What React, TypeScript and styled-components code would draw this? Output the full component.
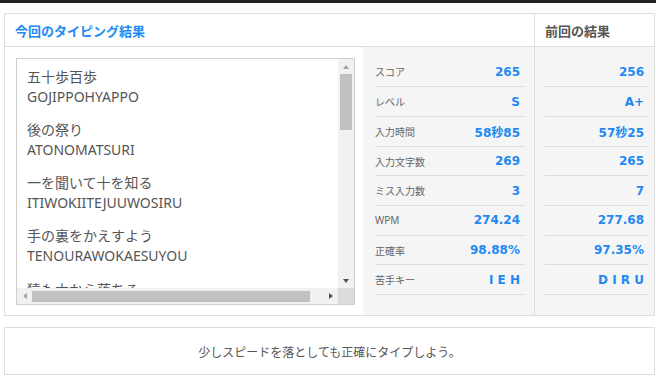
import styled, { createGlobalStyle, css } from "styled-components";

const GlobalStyle = createGlobalStyle`
  *, *::before, *::after { box-sizing: border-box; }
  html, body { margin: 0; padding: 0; background: #fff; }
  body {
    font-family: "Noto Sans", "Noto Sans CJK JP", sans-serif;
    overflow: hidden;
  }
`;

const BLUE = "#2189f2";

const TopBar = styled.div`
  height: 3px;
  background: #222;
`;

const Main = styled.main`
  padding: 10px 0 0 4px;
  width: 655px;
`;

const Panel = styled.section`
  display: flex;
  width: 651px;
  border: 1px solid #ddd;
  background: #fff;
`;

const Section = styled.div<{ $main?: boolean }>`
  display: flex;
  flex-direction: column;
  ${(p) =>
    p.$main
      ? css`
          width: 530px;
          border-right: 1px solid #ddd;
        `
      : css`
          flex: 1;
        `}
`;

const Header = styled.h2<{ $current?: boolean }>`
  margin: 0;
  height: 33px;
  display: flex;
  align-items: center;
  padding-left: 10px;
  border-bottom: 1px solid #ddd;
  font-family: "Noto Sans CJK JP", sans-serif;
  font-size: 13px;
  font-weight: 700;
  color: ${(p) => (p.$current ? BLUE : "#555")};
`;

const Body = styled.div`
  display: flex;
  height: 268px;
`;

const HistoryWrap = styled.div`
  width: 358px;
  padding: 11px 9px 10px 11px;
  background: #fff;
`;

const ScrollBox = styled.div`
  width: 339px;
  height: 247px;
  border: 1px solid #cfcfcf;
  display: grid;
  grid-template-columns: 1fr 16px;
  grid-template-rows: 1fr 16px;
`;

const ScrollContent = styled.div`
  overflow: hidden;
  padding: 7.5px 10px 0 10px;
  white-space: nowrap;
  color: #555;
  font-size: 14px;
  line-height: 20px;
`;

const Entry = styled.div`
  margin-bottom: 13.3px;
`;

const VBar = styled.div`
  background: #f1f1f1;
  display: flex;
  flex-direction: column;
  align-items: center;
`;

const HBar = styled.div`
  background: #f1f1f1;
  display: flex;
  align-items: center;
`;

const ArrowButton = styled.div`
  width: 15px;
  height: 15px;
  flex: none;
  display: flex;
  align-items: center;
  justify-content: center;
`;

const Arrow = styled.span<{ $dir: "up" | "down" | "left" | "right"; $dim?: boolean }>`
  width: 0;
  height: 0;
  ${({ $dir, $dim }) => {
    const c = $dim ? "#a3a3a3" : "#505050";
    switch ($dir) {
      case "up":
        return css`
          border-left: 3.5px solid transparent;
          border-right: 3.5px solid transparent;
          border-bottom: 4px solid ${c};
        `;
      case "down":
        return css`
          border-left: 3.5px solid transparent;
          border-right: 3.5px solid transparent;
          border-top: 4px solid ${c};
        `;
      case "left":
        return css`
          border-top: 3.5px solid transparent;
          border-bottom: 3.5px solid transparent;
          border-right: 4px solid ${c};
        `;
      default:
        return css`
          border-top: 3.5px solid transparent;
          border-bottom: 3.5px solid transparent;
          border-left: 4px solid ${c};
        `;
    }
  }}
`;

const VThumb = styled.div`
  width: 12px;
  height: 56px;
  background: #c1c1c1;
`;

const HThumb = styled.div`
  width: 278px;
  height: 11px;
  background: #c1c1c1;
`;

const Spacer = styled.div`
  flex: 1;
`;

const Corner = styled.div`
  background: #dcdcdc;
`;

const StatsCol = styled.div<{ $narrow?: boolean }>`
  background: #f5f5f5;
  padding: 10.6px ${(p) => (p.$narrow ? "5px 0 10px" : "9px 0 12px")};
  ${(p) =>
    p.$narrow
      ? css`
          flex: 1;
        `
      : css`
          width: 171px;
        `}
`;

const StatRow = styled.div`
  height: 29.7px;
  display: flex;
  align-items: center;
  justify-content: space-between;
  padding-right: 5px;
  border-bottom: 1px solid #ddd;
`;

const Label = styled.span`
  font-family: "Noto Sans", "Noto Sans CJK JP", sans-serif;
  font-size: 10px;
  color: #666;
`;

const Value = styled.span`
  font-family: "DejaVu Sans", "Noto Sans CJK JP", sans-serif;
  font-size: 12px;
  font-weight: 700;
  color: ${BLUE};
`;

const Message = styled.div`
  margin-top: 11px;
  width: 651px;
  height: 48px;
  border: 1px solid #ddd;
  display: flex;
  align-items: center;
  justify-content: center;
  font-family: "Noto Sans CJK JP", sans-serif;
  font-size: 12px;
  color: #555;
`;

const history = [
  ["五十歩百歩", "GOJIPPOHYAPPO"],
  ["後の祭り", "ATONOMATSURI"],
  ["一を聞いて十を知る", "ITIWOKIITEJUUWOSIRU"],
  ["手の裏をかえすよう", "TENOURAWOKAESUYOU"],
  ["猿も木から落ちる", "SARUMOKIKARAOTIRU"],
];

const labels = ["スコア", "レベル", "入力時間", "入力文字数", "ミス入力数", "WPM", "正確率", "苦手キー"];
const current = ["265", "S", "58秒85", "269", "3", "274.24", "98.88%", "I E H"];
const previous = ["256", "A+", "57秒25", "265", "7", "277.68", "97.35%", "D I R U"];

export default function App() {
  return (
    <>
      <GlobalStyle />
      <TopBar />
      <Main>
        <Panel>
          <Section $main>
            <Header $current>今回のタイピング結果</Header>
            <Body>
              <HistoryWrap>
                <ScrollBox>
                  <ScrollContent>
                    {history.map(([jp, romaji]) => (
                      <Entry key={romaji}>
                        <div>{jp}</div>
                        <div>{romaji}</div>
                      </Entry>
                    ))}
                  </ScrollContent>
                  <VBar>
                    <ArrowButton>
                      <Arrow $dir="up" $dim />
                    </ArrowButton>
                    <VThumb />
                    <Spacer />
                    <ArrowButton>
                      <Arrow $dir="down" />
                    </ArrowButton>
                  </VBar>
                  <HBar>
                    <ArrowButton>
                      <Arrow $dir="left" $dim />
                    </ArrowButton>
                    <HThumb />
                    <Spacer />
                    <ArrowButton>
                      <Arrow $dir="right" />
                    </ArrowButton>
                  </HBar>
                  <Corner />
                </ScrollBox>
              </HistoryWrap>
              <StatsCol>
                {labels.map((l, i) => (
                  <StatRow key={l}>
                    <Label>{l}</Label>
                    <Value>{current[i]}</Value>
                  </StatRow>
                ))}
              </StatsCol>
            </Body>
          </Section>
          <Section>
            <Header>前回の結果</Header>
            <Body>
              <StatsCol $narrow>
                {previous.map((v, i) => (
                  <StatRow key={i}>
                    <span />
                    <Value>{v}</Value>
                  </StatRow>
                ))}
              </StatsCol>
            </Body>
          </Section>
        </Panel>
        <Message>少しスピードを落としても正確にタイプしよう。</Message>
      </Main>
    </>
  );
}
